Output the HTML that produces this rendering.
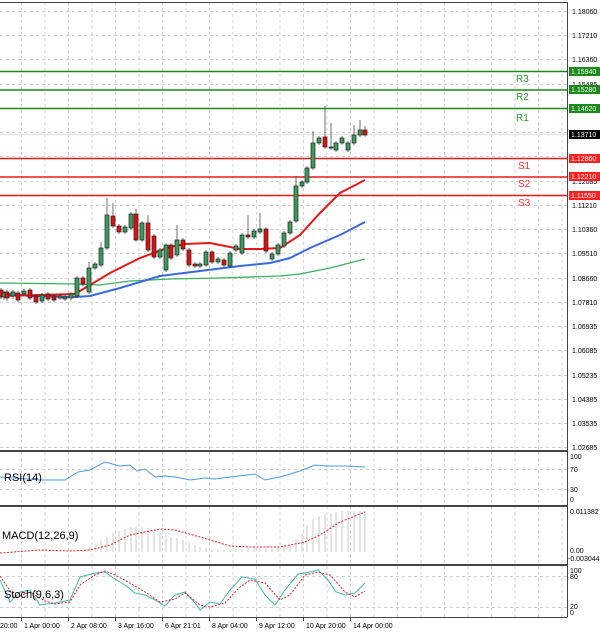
<!DOCTYPE html>
<html><head><meta charset="utf-8"><style>
body{margin:0;background:#fff;}
svg{display:block;font-family:"Liberation Sans",sans-serif;}
.ax{font-size:7px;fill:#000;}
</style></head><body>
<svg width="600" height="635" viewBox="0 0 600 635" xmlns="http://www.w3.org/2000/svg">
<rect width="600" height="635" fill="#fff"/>
<g id="grid" stroke="#d0d0d0" stroke-dasharray="3,3" stroke-width="1">
<path d="M21.5 2V617M45 2V617M68.5 2V617M92 2V617M115.5 2V617M139 2V617M162.5 2V617M186 2V617M209.5 2V617M233 2V617M256.5 2V617M280 2V617M303.5 2V617M327 2V617M350.5 2V617M374 2V617M397.5 2V617M421 2V617M444.5 2V617M468 2V617M491.5 2V617M515 2V617M538.5 2V617M562 2V617"/>
<path d="M0 11.5H567M0 35.5H567M0 59.5H567M0 84.5H567M0 108.5H567M0 132.5H567M0 156.5H567M0 181.5H567M0 205.5H567M0 229.5H567M0 253.5H567M0 278.5H567M0 302.5H567M0 326.5H567M0 350.5H567M0 375.5H567M0 399.5H567M0 423.5H567M0 447.5H567"/>
<path d="M0 469.5H567M0 489.5H567M0 576.5H567M0 607.5H567"/>
</g>
<!-- frames -->
<g stroke="#444" fill="none">
<path d="M0 2.5H567.5V617" stroke-width="1"/>
<path d="M0 451H567M0 506H567M0 565H567" stroke-width="2"/>
<path d="M0 617.5H567.5"/>
</g>
<!-- levels -->
<g stroke-width="1.5">
<path d="M0 71.5H567M0 90H567M0 108.5H567" stroke="#1a8a1a"/>
<path d="M0 158.5H567M0 177H567M0 195.5H567" stroke="#e81818"/>
<path d="M0 134.5H567" stroke="#e6e6e6"/>
</g>
<g font-size="10" fill="#2a9a2a"><text x="516" y="82">R3</text><text x="516" y="100">R2</text><text x="516" y="121">R1</text></g>
<g font-size="10" fill="#ff3030"><text x="518" y="169">S1</text><text x="518" y="187">S2</text><text x="518" y="206">S3</text></g>
<!-- MAs -->
<polyline fill="none" stroke="#3cb060" stroke-width="1.3" points="0,283 75,284 100,285 130,281 170,279 220,278 280,276 300,274 330,268 365,259"/>
<polyline fill="none" stroke="#3a68e0" stroke-width="2" points="0,293 30,296 75,297 90,296 120,288 160,276 200,271 240,266 270,263 290,258 310,248 340,235 365,222"/>
<polyline fill="none" stroke="#e81818" stroke-width="2" points="0,296 75,294 90,285 110,273 140,258 170,247 185,244 210,243 225,246 240,249 260,249 280,248 300,235 320,213 340,193 365,180"/>
<!-- candles -->
<g id="candles" stroke="#222" stroke-width="0.8"></g>
<g stroke="#333" stroke-width="0.7">
<path d="M1 288V299M4 291V300M7 290V301M13 290V299M18 291V302M24 289V296M30 288V300M36 294V304M42 293V303M48 292V301M54 294V302M60 294V300M65 295V301M71 292V300M77 276V298M83 276V286M89 262V294M95 262V270M101 242V267M107 198V250M113 203V228M119 224V234M125 225V234M131 212V230M136 209V242M142 221V242M148 215V252M154 234V259M160 248V259M166 243V272M171 243V260M177 225V257M183 238V251M189 248V267M195 262V268M200 262V268M206 250V267M212 250V264M218 257V264M224 258V267M230 251V268M236 244V252M242 233V255M248 215V239M254 229V239M260 213V234M266 227V253M272 252V261M278 243V256M284 231V248M290 220V235M296 176V223M302 180V188M307 166V184M313 131V170M319 136V145M325 106V149M331 123V150M336 141V152M342 136V145M348 141V152M354 125V145M360 120V137M365 126V137"/>
</g>
<g stroke="#222" stroke-width="0.7">
<rect x="-1" y="290" width="4" height="7" fill="#e01010"/><rect x="2" y="293" width="4" height="4" fill="#3c9a5c"/><rect x="5" y="292" width="4" height="6" fill="#e01010"/><rect x="11" y="292" width="4" height="4" fill="#3c9a5c"/><rect x="16" y="293" width="4" height="7" fill="#e01010"/><rect x="22" y="291" width="4" height="3" fill="#3c9a5c"/><rect x="28" y="290" width="4" height="8" fill="#e01010"/><rect x="34" y="296" width="4" height="6" fill="#e01010"/><rect x="40" y="295" width="4" height="6" fill="#3c9a5c"/><rect x="46" y="294" width="4" height="5" fill="#e01010"/><rect x="52" y="296" width="4" height="4" fill="#e01010"/><rect x="58" y="296" width="4" height="2" fill="#3c9a5c"/><rect x="63" y="297" width="4" height="2" fill="#3c9a5c"/><rect x="69" y="294" width="4" height="4" fill="#3c9a5c"/>
<rect x="75" y="278" width="4" height="18" fill="#3c9a5c"/><rect x="81" y="278" width="4" height="6" fill="#e01010"/><rect x="87" y="268" width="4" height="24" fill="#3c9a5c"/><rect x="93" y="264" width="4" height="4" fill="#3c9a5c"/><rect x="99" y="248" width="4" height="17" fill="#3c9a5c"/><rect x="105" y="215" width="4" height="33" fill="#3c9a5c"/><rect x="111" y="216" width="4" height="10" fill="#e01010"/><rect x="117" y="226" width="4" height="6" fill="#e01010"/><rect x="123" y="227" width="4" height="5" fill="#3c9a5c"/><rect x="129" y="214" width="4" height="14" fill="#3c9a5c"/><rect x="134" y="214" width="4" height="26" fill="#e01010"/><rect x="140" y="223" width="4" height="17" fill="#3c9a5c"/><rect x="146" y="223" width="4" height="27" fill="#e01010"/><rect x="152" y="236" width="4" height="21" fill="#e01010"/><rect x="158" y="250" width="4" height="7" fill="#3c9a5c"/><rect x="164" y="245" width="4" height="25" fill="#3c9a5c"/><rect x="169" y="245" width="4" height="13" fill="#e01010"/><rect x="175" y="240" width="4" height="15" fill="#3c9a5c"/><rect x="181" y="240" width="4" height="9" fill="#e01010"/><rect x="187" y="250" width="4" height="15" fill="#e01010"/><rect x="193" y="264" width="4" height="2" fill="#e01010"/><rect x="198" y="264" width="4" height="2" fill="#3c9a5c"/><rect x="204" y="252" width="4" height="13" fill="#3c9a5c"/><rect x="210" y="252" width="4" height="10" fill="#e01010"/><rect x="216" y="259" width="4" height="3" fill="#3c9a5c"/><rect x="222" y="260" width="4" height="5" fill="#e01010"/><rect x="228" y="253" width="4" height="13" fill="#3c9a5c"/><rect x="234" y="246" width="4" height="4" fill="#3c9a5c"/><rect x="240" y="235" width="4" height="18" fill="#3c9a5c"/><rect x="246" y="235" width="4" height="2" fill="#e01010"/><rect x="252" y="231" width="4" height="6" fill="#3c9a5c"/><rect x="258" y="229" width="4" height="3" fill="#3c9a5c"/><rect x="264" y="229" width="4" height="22" fill="#e01010"/><rect x="270" y="254" width="4" height="5" fill="#3c9a5c"/><rect x="276" y="245" width="4" height="9" fill="#3c9a5c"/><rect x="282" y="233" width="4" height="13" fill="#3c9a5c"/><rect x="288" y="222" width="4" height="11" fill="#3c9a5c"/><rect x="294" y="186" width="4" height="35" fill="#3c9a5c"/><rect x="300" y="182" width="4" height="4" fill="#3c9a5c"/><rect x="305" y="168" width="4" height="14" fill="#3c9a5c"/><rect x="311" y="143" width="4" height="25" fill="#3c9a5c"/><rect x="317" y="138" width="4" height="5" fill="#3c9a5c"/><rect x="323" y="137" width="4" height="10" fill="#e01010"/><rect x="329" y="147" width="4" height="1" fill="#3c9a5c"/><rect x="334" y="143" width="4" height="7" fill="#3c9a5c"/><rect x="340" y="138" width="4" height="5" fill="#3c9a5c"/><rect x="346" y="143" width="4" height="7" fill="#3c9a5c"/><rect x="352" y="135" width="4" height="8" fill="#3c9a5c"/><rect x="358" y="130" width="4" height="5" fill="#3c9a5c"/><rect x="363" y="130" width="4" height="5" fill="#e01010"/>
</g>
<!-- price axis -->
<g class="ax">
<text x="572" y="14">1.18060</text><text x="572" y="38">1.17210</text><text x="572" y="62">1.16360</text><text x="572" y="87">1.15485</text>
<text x="572" y="184">1.12085</text><text x="572" y="208">1.11210</text><text x="572" y="232">1.10360</text><text x="572" y="256">1.09510</text><text x="572" y="281">1.08660</text><text x="572" y="305">1.07810</text><text x="572" y="329">1.06935</text><text x="572" y="353">1.06085</text><text x="572" y="378">1.05235</text><text x="572" y="402">1.04385</text><text x="572" y="426">1.03535</text><text x="572" y="450">1.02685</text>
</g>
<g font-size="7">
<rect x="569" y="67" width="31" height="9" fill="#1a8a1a"/><text x="571" y="74" fill="#fff">1.15940</text>
<rect x="569" y="85" width="31" height="9" fill="#1a8a1a"/><text x="571" y="92" fill="#fff">1.15280</text>
<rect x="569" y="104" width="31" height="9" fill="#1a8a1a"/><text x="571" y="111" fill="#fff">1.14620</text>
<rect x="569" y="130" width="31" height="9" fill="#000"/><text x="571" y="137" fill="#fff">1.13710</text>
<rect x="569" y="154" width="31" height="9" fill="#ff2020"/><text x="571" y="161" fill="#fff">1.12860</text>
<rect x="569" y="172" width="31" height="9" fill="#ff2020"/><text x="571" y="179" fill="#fff">1.12210</text>
<rect x="569" y="191" width="31" height="9" fill="#ff2020"/><text x="571" y="198" fill="#fff">1.11550</text>
</g>
<!-- RSI -->
<polyline fill="none" stroke="#4a9ae8" stroke-width="1" points="0,477 40,480 65,480 78,472 90,470 105,462 120,466 130,465 137,471 145,469 155,477 165,476 175,477 190,480 205,478 215,479 230,477 255,474 265,480 280,477 300,471 315,465 325,466 345,466 365,467"/>
<text x="4" y="481" font-size="11" fill="#000">RSI(14)</text>
<g class="ax"><text x="570" y="459">100</text><text x="570" y="472">70</text><text x="570" y="492">30</text><text x="570" y="502">0</text></g>
<!-- MACD -->
<g stroke="#c8c8c8" stroke-width="1">
<path d="M84 552V550M90 552V547M96 552V543M101 552V540M107 552V537M113 552V533M119 552V531M125 552V529M131 552V527M136 552V527M142 552V527M148 552V528M154 552V530M160 552V532M166 552V535M171 552V537M177 552V538M183 552V540M189 552V542M195 552V545M200 552V547M206 552V548M212 552V549M218 552V550M224 552V550M230 552V550M236 552V549M242 552V549M248 552V548M254 552V548M260 552V548M266 552V548M272 552V548M278 552V547M284 552V546M290 552V545M296 552V539M302 552V533M307 552V525M313 552V519M319 552V516M325 552V514M331 552V513M336 552V512M342 552V511M348 552V511M354 552V511M360 552V511M365 552V511"/>
</g>
<polyline fill="none" stroke="#e82020" stroke-width="1" stroke-dasharray="2,1.5" points="0,553 40,550 70,551 90,550 110,545 130,535 150,531 160,529 175,530 200,537 230,546 250,547 280,547 305,542 320,535 340,522 365,512"/>
<text x="2" y="539" font-size="11" fill="#000">MACD(12,26,9)</text>
<g class="ax"><text x="570" y="514">0.011382</text><text x="570" y="553">0.00</text><text x="568" y="561">-0.003044</text></g>
<!-- Stoch -->
<polyline fill="none" stroke="#40b8b0" stroke-width="1" points="0,580 10,602 20,592 30,590 40,605 55,603 70,600 80,577 95,573 105,572 115,579 125,585 135,593 145,595 155,600 165,606 175,595 185,592 195,603 200,610 210,602 220,604 230,590 242,577 255,579 265,595 275,605 285,590 298,574 310,572 318,570 328,580 336,592 345,595 355,593 365,583"/>
<polyline fill="none" stroke="#e82020" stroke-width="1" stroke-dasharray="2,1.5" points="0,576 15,598 30,592 45,601 55,604 70,602 80,585 95,575 105,571 115,575 130,583 145,592 160,602 175,599 185,593 200,605 210,607 225,603 240,587 250,580 265,583 280,600 290,595 305,575 318,572 330,575 345,592 355,597 365,591"/>
<text x="4" y="598" font-size="11" fill="#000">Stoch(9,6,3)</text>
<g class="ax"><text x="570" y="573">100</text><text x="570" y="579">80</text><text x="570" y="609">20</text><text x="570" y="615">0</text></g>
<!-- time axis -->
<g class="ax">
<text x="0" y="628">20:00</text><text x="24" y="628">1 Apr 00:00</text><text x="71" y="628">2 Apr 08:00</text><text x="118" y="628">3 Apr 16:00</text><text x="165" y="628">6 Apr 21:01</text><text x="212" y="628">8 Apr 04:00</text><text x="259" y="628">9 Apr 12:00</text><text x="306" y="628">10 Apr 20:00</text><text x="353" y="628">14 Apr 00:00</text>
</g>
<path d="M21.5 617V621M68.5 617V621M115.5 617V621M162.5 617V621M209.5 617V621M256.5 617V621M303.5 617V621M350.5 617V621" stroke="#444"/>
</svg>
</body></html>
